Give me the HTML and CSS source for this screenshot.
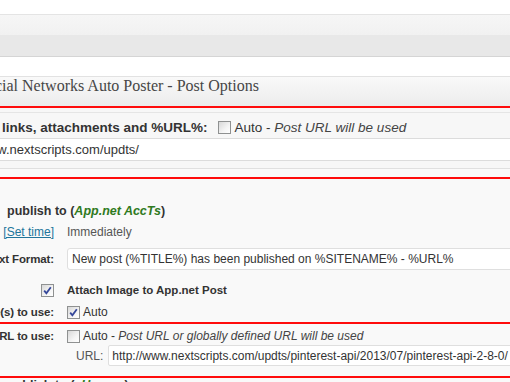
FILE: index.html
```html
<!DOCTYPE html>
<html lang="en">
<head>
    <meta charset="UTF-8">
    <meta name="viewport" content="width=device-width, initial-scale=1.0">
    <title>SNAP - Post Options</title>
    <link rel="stylesheet" href="styles.css">
</head>
<body>
    <!-- admin bars above the box -->
    <div class="top-white"></div>
    <div class="band-light"></div>
    <div class="band-dark"></div>
    <div class="spacer"></div>

    <div class="postbox">
        <h3 class="hndle">Social Networks Auto Poster - Post Options</h3>

        <!-- URL for links -->
        <div class="red-box url-box">
            <div class="url-row">
                <b>links, attachments and %URL%:</b>
                <span class="cb"></span>
                <span class="auto">Auto - <i>Post URL will be used</i></span>
            </div>
            <input type="text" class="url-input" value="http://www.nextscripts.com/updts/">
            <div class="url-sep"></div>
        </div>

        <!-- App.net -->
        <div class="network">
            <div class="net-title">publish to (<i class="acc">App.net AccTs</i>)</div>

            <div class="opt opt-time">
                <div class="lbl"><a href="#">[Set time]</a></div>
                <div class="val muted">Immediately</div>
            </div>

            <div class="opt opt-format">
                <div class="lbl">Post Text Format:</div>
                <div class="val"><input type="text" class="txt" value="New post (%TITLE%) has been published on %SITENAME% - %URL%"></div>
            </div>

            <div class="opt opt-attach">
                <div class="lbl cb-cell">
                    <span class="cb"><svg width="11" height="11" viewBox="0 0 11 11"><path d="M2.2 5.6 L4.4 8.3 L8.8 2.2" fill="none" stroke="#35479a" stroke-width="1.8"/></svg></span>
                </div>
                <div class="val"><b>Attach Image to App.net Post</b></div>
            </div>

            <div class="opt opt-image">
                <div class="lbl">Image(s) to use:</div>
                <div class="val">
                    <span class="cb"><svg width="11" height="11" viewBox="0 0 11 11"><path d="M2.2 5.6 L4.4 8.3 L8.8 2.2" fill="none" stroke="#35479a" stroke-width="1.8"/></svg></span>
                    <span>Auto</span>
                </div>
            </div>

            <div class="red-box url-opts">
                <div class="opt opt-url">
                    <div class="lbl">URL to use:</div>
                    <div class="val">
                        <span class="cb"></span>
                        <span>Auto - <i class="note">Post URL or globally defined URL will be used</i></span>
                    </div>
                </div>
                <div class="opt opt-urlfield">
                    <div class="lbl"></div>
                    <div class="val url-field">
                        <span class="muted">URL:</span>
                        <input type="text" class="txt" value="http://www.nextscripts.com/updts/pinterest-api/2013/07/pinterest-api-2-8-0/">
                    </div>
                </div>
            </div>

            <div class="net-title next">publish to (<i class="acc">vHrenov</i>)</div>
        </div>
    </div>
</body>
</html>
```

FILE: styles.css
```css
html, body {
    overflow: hidden;
}
body {
    margin: 0;
    font-family: "Liberation Sans", Arial, sans-serif;
    color: #333;
    background-color: #f9f9f9;
    height: 382px;
}
.top-white {
    height: 14px;
    background-color: #fff;
    border-bottom: 1px solid #e4e4e4;
}
.band-light {
    height: 20px;
    background: linear-gradient(#f6f6f6, #f1f1f1);
}
.band-dark {
    height: 21px;
    background-color: #e8e8e8;
    border-bottom: 1px solid #d5d5d5;
}
.spacer {
    height: 19px;
    background-color: #fff;
    border-bottom: 1px solid #e2e2e2;
}
.hndle {
    margin: 0;
    height: 29px;
    line-height: 29px;
    font: normal 16px "Liberation Serif", Georgia, serif;
    color: #464646;
    background: linear-gradient(#f9f9f9, #ececec);
    text-indent: -22px;
    white-space: nowrap;
}
.red-box {
    border-top: 2px solid #ff0c0c;
    border-bottom: 2px solid #ff0c0c;
}
.url-box {
    padding-top: 4px;
    background-color: #f7f7f7;
}
.url-row {
    display: flex;
    align-items: center;
    height: 21px;
    padding: 4px 0 0 2px;
    border-top: 1px solid #e5e5e5;
    font-size: 13.5px;
    white-space: nowrap;
}
.url-row .cb {
    margin: 0 4px 0 10px;
}
.auto i {
    color: #444;
}
.url-input {
    display: block;
    box-sizing: border-box;
    height: 23px;
    width: 640px;
    margin-left: -58px;
    padding: 0 3px;
    border: 1px solid #dcdcdc;
    background-color: #fff;
    font: 13px "Liberation Sans", Arial, sans-serif;
    color: #333;
    outline: none;
}
.url-sep {
    margin-top: 7px;
    height: 8px;
    border-top: 1px solid #e0e0e0;
    background-color: #fafafa;
}
.network {
    font-size: 12px;
}
.net-title {
    margin-top: 24px;
    padding-left: 7px;
    line-height: 16px;
    font-size: 12.5px;
    font-weight: bold;
    white-space: nowrap;
}
.net-title.next {
    margin-top: 0;
    line-height: 14px;
}
.acc {
    color: #2f7a21;
}
.opt {
    display: grid;
    grid-template-columns: 155px 1fr;
    column-gap: 12px;
    align-items: center;
    margin-left: -100px;
    height: 16px;
    white-space: nowrap;
}
.opt .lbl {
    text-align: right;
    font-size: 11.5px;
    font-weight: bold;
    letter-spacing: -0.12px;
    padding-right: 1px;
}
.opt .val {
    display: flex;
    align-items: center;
    gap: 3px;
}
.opt .val b {
    font-size: 11.5px;
}
.lbl a {
    font-size: 12px;
    font-weight: normal;
    letter-spacing: 0;
    color: #21759b;
}
.muted {
    color: #555;
}
.opt-time {
    margin-top: 5px;
}
.opt-format {
    margin-top: 8px;
    height: 22px;
}
.opt-attach {
    margin-top: 12px;
}
.opt-image {
    margin-top: 6px;
}
.cb-cell {
    display: flex;
    justify-content: flex-end;
}
.txt {
    box-sizing: border-box;
    height: 22px;
    width: 480px;
    padding: 0 4px;
    border: 1px solid #dfdfdf;
    border-radius: 3px;
    background-color: #fff;
    font: 12px "Liberation Sans", Arial, sans-serif;
    color: #333;
    outline: none;
}
.url-opts {
    margin-top: 2px;
    padding: 4px 0 10px;
}
.opt-url {
    margin-top: 0;
}
.note {
    color: #444;
}
.opt-urlfield {
    margin-top: 1px;
    height: 21px;
}
.url-field {
    padding-left: 9px;
}
.url-field .txt {
    height: 21px;
    width: 440px;
    margin-left: 2px;
    padding-left: 3px;
    border-radius: 2px;
}
.cb {
    display: inline-flex;
    align-items: center;
    justify-content: center;
    box-sizing: border-box;
    width: 13px;
    height: 13px;
    flex: none;
    border: 1px solid #8f9191;
    background: linear-gradient(135deg, #d8d8d8, #f4f4f4 60%, #fff);
}
```
